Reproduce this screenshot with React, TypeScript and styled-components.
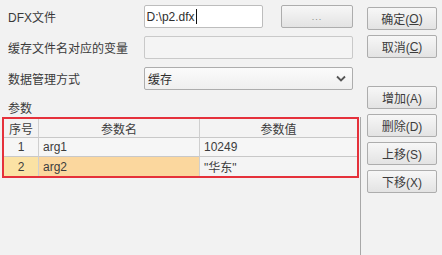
import React from "react";
import styled, { createGlobalStyle } from "styled-components";

const Global = createGlobalStyle`
  html, body { margin: 0; padding: 0; background: #f2f2f2; }
  * { box-sizing: border-box; }
`;

const Window = styled.div`
  width: 442px;
  height: 255px;
  display: flex;
  background: #f2f2f2;
  font-family: "Liberation Sans", "Noto Sans CJK SC", sans-serif;
  font-size: 12px;
  color: #3a3a3a;
  overflow: hidden;
`;

const Left = styled.div`
  width: 361px;
  display: flex;
  flex-direction: column;
  padding: 5px 0 0 2px;
`;

const Form = styled.div`
  display: flex;
  flex-direction: column;
  gap: 8px;
  padding-right: 8px;
`;

const Row = styled.div`
  display: flex;
  align-items: center;
  height: 23px;
`;

const Label = styled.div`
  width: 142px;
  padding-left: 6px;
  white-space: nowrap;
`;

const Input = styled.div<{ $w?: number }>`
  height: 23px;
  ${(p) => (p.$w ? `width: ${p.$w}px;` : "flex: 1;")}
  background: #ffffff;
  border: 1px solid #bdbdbd;
  border-radius: 2px;
  display: flex;
  align-items: center;
  padding-left: 2px;
  color: #2e2e2e;
  font-size: 12px;
`;

const Caret = styled.span`
  display: inline-block;
  width: 1px;
  height: 15px;
  background: #111;
  margin-left: 1px;
`;

const EmptyInput = styled(Input)`
  background: #f4f4f4;
  border-color: #c9c9c9;
`;

const Select = styled(Input)`
  justify-content: space-between;
  padding: 0 6px 0 3px;
  background: linear-gradient(#fbfbfb, #efefef);
  border-color: #adadad;
`;

const Button = styled.div<{ $w?: number }>`
  width: ${(p) => p.$w ?? 70}px;
  height: 23px;
  border: 1px solid #adadad;
  border-radius: 2px;
  background: linear-gradient(#f7f7f7, #e3e3e3);
  display: flex;
  align-items: center;
  justify-content: center;
  color: #3c3c3c;
  font-size: 12px;
  white-space: nowrap;
`;

const BrowseButton = styled(Button)`
  margin-left: 18px;
  color: #888;
  font-size: 9px;
  letter-spacing: 1px;
`;

const SectionLabel = styled.div`
  padding: 9px 0 0 6px;
  height: 26px;
`;

const TableArea = styled.div`
  flex: 1;
  border-right: 1px solid #a8a8a8;
  margin-top: 1px;
`;

const Table = styled.div`
  border: 2px solid #e5313b;
  margin-right: 1px;
  display: grid;
  grid-template-columns: 35px 161px 1fr;
`;

const Cell = styled.div<{ $bg?: string; $head?: boolean; $center?: boolean }>`
  height: 19px;
  display: flex;
  align-items: center;
  justify-content: ${(p) => (p.$center || p.$head ? "center" : "flex-start")};
  padding-left: ${(p) => (p.$center || p.$head ? 0 : 4)}px;
  background: ${(p) => p.$bg ?? "#f3f3f3"};
  border-right: 1px solid #cfcfcf;
  border-bottom: 1px solid #c8c8c8;
  color: #3c3c3c;
  white-space: nowrap;
  &:nth-child(3n) { border-right: none; }
  &:nth-last-child(-n + 3) { border-bottom: none; }
`;

const Right = styled.div`
  flex: 1;
  display: flex;
  flex-direction: column;
  padding: 7px 0 0 6px;
  gap: 5px;
`;

const Spacer = styled.div`
  height: 18px;
`;

const U = styled.span`
  text-decoration: underline;
`;

export default function App() {
  return (
    <>
      <Global />
      <Window>
        <Left>
          <Form>
            <Row>
              <Label>DFX文件</Label>
              <Input $w={120}>
                D:\p2.dfx<Caret />
              </Input>
              <BrowseButton $w={72}>...</BrowseButton>
            </Row>
            <Row>
              <Label>缓存文件名对应的变量</Label>
              <EmptyInput />
            </Row>
            <Row>
              <Label>数据管理方式</Label>
              <Select>
                <span>缓存</span>
                <svg width="10" height="7" viewBox="0 0 10 7">
                  <path d="M1 1.5 L5 5.5 L9 1.5" fill="none" stroke="#555" strokeWidth="1.8" />
                </svg>
              </Select>
            </Row>
          </Form>
          <SectionLabel>参数</SectionLabel>
          <TableArea>
            <Table>
              <Cell $head>序号</Cell>
              <Cell $head>参数名</Cell>
              <Cell $head>参数值</Cell>
              <Cell $center $bg="#f6f6f6">1</Cell>
              <Cell $bg="#f6f6f6">arg1</Cell>
              <Cell $bg="#f6f6f6">10249</Cell>
              <Cell $center $bg="#fbe2a4">2</Cell>
              <Cell $bg="#fbd79e">arg2</Cell>
              <Cell $bg="#f4f4f4">"华东"</Cell>
            </Table>
          </TableArea>
        </Left>
        <Right>
          <Button>
            确定(<U>O</U>)
          </Button>
          <Button>
            取消(<U>C</U>)
          </Button>
          <Spacer />
          <Button>增加(A)</Button>
          <Button>删除(D)</Button>
          <Button>上移(S)</Button>
          <Button>下移(X)</Button>
        </Right>
      </Window>
    </>
  );
}
